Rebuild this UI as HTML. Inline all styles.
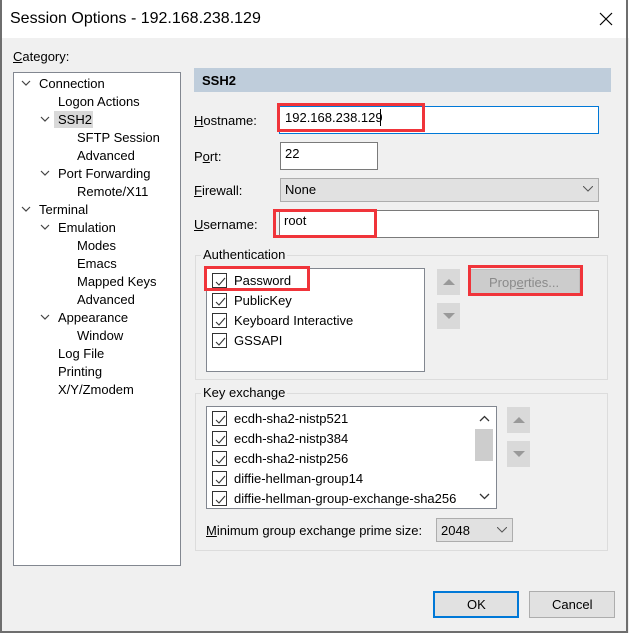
<!DOCTYPE html>
<html><head><meta charset="utf-8"><style>
*{box-sizing:border-box;margin:0;padding:0}
body{width:629px;height:633px;background:#fff;font-family:"Liberation Sans",sans-serif;font-size:13px;color:#000;position:relative;overflow:hidden}
.a{position:absolute}
.t{position:absolute;white-space:nowrap;line-height:14px}
.win{left:0;top:0;width:628px;height:633px;border:1px solid #6e6e6e;border-top:none;border-bottom:2px solid #6e6e6e;border-left:2px solid #6e6e6e;border-right:2px solid #6e6e6e}
.cb{position:absolute;width:15px;height:15px;border:1px solid #333;background:#fff}
.cb svg{position:absolute;left:1px;top:1px}
.u{text-decoration:underline}
</style></head><body>
<div class="a" style="left:0;top:38px;width:629px;height:595px;background:#f0f0f0"></div>
<div class="a win"></div>
<div class="t" style="left:10px;top:10px;font-size:16px;line-height:18px">Session Options - 192.168.238.129</div>
<svg class="a" style="left:599px;top:12px" width="14" height="14"><path d="M1 1L13 13M13 1L1 13" stroke="#000" stroke-width="1.2"/></svg>
<div class="t" style="left:13px;top:50px"><span class="u">C</span>ategory:</div>
<div class="a" style="left:13px;top:72px;width:168px;height:494px;background:#fff;border:1px solid #828790"></div>
<div class="a" style="left:54px;top:111px;width:39px;height:17px;background:#d9d9d9"></div>
<svg class="a" style="left:0;top:0" width="190" height="330" fill="none" stroke="#444" stroke-width="1.2">
<path d="M22 81l4 4 4-4M41 117l4 4 4-4M41 171l4 4 4-4M22 207l4 4 4-4M41 225l4 4 4-4M41 315l4 4 4-4"/></svg>
<div class="t" style="left:39px;top:77px">Connection</div>
<div class="t" style="left:58px;top:95px">Logon Actions</div>
<div class="t" style="left:58px;top:113px">SSH2</div>
<div class="t" style="left:77px;top:131px">SFTP Session</div>
<div class="t" style="left:77px;top:149px">Advanced</div>
<div class="t" style="left:58px;top:167px">Port Forwarding</div>
<div class="t" style="left:77px;top:185px">Remote/X11</div>
<div class="t" style="left:39px;top:203px">Terminal</div>
<div class="t" style="left:58px;top:221px">Emulation</div>
<div class="t" style="left:77px;top:239px">Modes</div>
<div class="t" style="left:77px;top:257px">Emacs</div>
<div class="t" style="left:77px;top:275px">Mapped Keys</div>
<div class="t" style="left:77px;top:293px">Advanced</div>
<div class="t" style="left:58px;top:311px">Appearance</div>
<div class="t" style="left:77px;top:329px">Window</div>
<div class="t" style="left:58px;top:347px">Log File</div>
<div class="t" style="left:58px;top:365px">Printing</div>
<div class="t" style="left:58px;top:383px">X/Y/Zmodem</div>

<div class="a" style="left:194px;top:68px;width:417px;height:24px;background:#bfcddb"></div>
<div class="t" style="left:202px;top:74px;font-weight:bold">SSH2</div>

<div class="t" style="left:194px;top:114px"><span class="u">H</span>ostname:</div>
<div class="a" style="left:279px;top:106px;width:320px;height:28px;background:#fff;border:1px solid #0078d7"></div>
<div class="t" style="left:285px;top:111px;font-size:13px">192.168.238.129</div>
<div class="a" style="left:380px;top:109px;width:1px;height:17px;background:#000"></div>
<div class="a" style="left:277px;top:103px;width:148px;height:29px;border:3px solid #f0343a"></div>

<div class="t" style="left:194px;top:150px">P<span class="u">o</span>rt:</div>
<div class="a" style="left:280px;top:142px;width:98px;height:28px;background:#fff;border:1px solid #7a7a7a"></div>
<div class="t" style="left:285px;top:147px;font-size:13px">22</div>

<div class="t" style="left:194px;top:184px"><span class="u">F</span>irewall:</div>
<div class="a" style="left:280px;top:178px;width:319px;height:24px;background:#e1e1e1;border:1px solid #adadad"></div>
<div class="t" style="left:285px;top:183px">None</div>
<svg class="a" style="left:583px;top:186px" width="10" height="6"><path d="M0 0l5 5 5-5" stroke="#555" fill="none"/></svg>

<div class="t" style="left:194px;top:218px"><span class="u">U</span>sername:</div>
<div class="a" style="left:279px;top:210px;width:320px;height:28px;background:#fff;border:1px solid #7a7a7a"></div>
<div class="t" style="left:284px;top:214px;font-size:13px">root</div>
<div class="a" style="left:273px;top:209px;width:104px;height:29px;border:3px solid #f0343a"></div>

<div class="a" style="left:195px;top:255px;width:413px;height:125px;border:1px solid #dcdcdc"></div>
<div class="t" style="left:201px;top:248px;background:#f0f0f0;padding:0 2px">Authentication</div>
<div class="a" style="left:206px;top:268px;width:219px;height:104px;background:#fff;border:1px solid #828790"></div>
<div class="a" style="left:437px;top:269px;width:23px;height:26px;background:#d9d9d9"></div>
<div class="a" style="left:437px;top:303px;width:23px;height:26px;background:#d9d9d9"></div>
<svg class="a" style="left:443px;top:279px" width="12" height="6"><path d="M0 6L6 0 12 6z" fill="#999"/></svg>
<svg class="a" style="left:443px;top:313px" width="12" height="6"><path d="M0 0L6 6 12 0z" fill="#999"/></svg>
<div class="a" style="left:470px;top:269px;width:110px;height:26px;background:#cccccc;border:1px solid #bfbfbf"></div>
<div class="t" style="left:489px;top:276px;color:#8a8a8a">Prop<span class="u">e</span>rties...</div>
<div class="a" style="left:468px;top:265px;width:115px;height:31px;border:3px solid #f0343a"></div>

<div class="a" style="left:195px;top:393px;width:413px;height:158px;border:1px solid #dcdcdc"></div>
<div class="t" style="left:201px;top:386px;background:#f0f0f0;padding:0 2px">Key exchange</div>
<div class="a" style="left:206px;top:406px;width:291px;height:103px;background:#fff;border:1px solid #828790"></div>
<div class="a" style="left:475px;top:429px;width:18px;height:32px;background:#cdcdcd"></div>
<svg class="a" style="left:479px;top:415px" width="11" height="7"><path d="M1 6l4.5-4.5L10 6" stroke="#333" fill="none" stroke-width="1.3"/></svg>
<svg class="a" style="left:479px;top:493px" width="11" height="7"><path d="M1 1l4.5 4.5L10 1" stroke="#333" fill="none" stroke-width="1.3"/></svg>
<div class="a" style="left:507px;top:407px;width:23px;height:26px;background:#d9d9d9"></div>
<div class="a" style="left:507px;top:441px;width:23px;height:26px;background:#d9d9d9"></div>
<svg class="a" style="left:513px;top:417px" width="12" height="6"><path d="M0 6L6 0 12 6z" fill="#999"/></svg>
<svg class="a" style="left:513px;top:451px" width="12" height="6"><path d="M0 0L6 6 12 0z" fill="#999"/></svg>

<div class="t" style="left:206px;top:524px"><span class="u">M</span>inimum group exchange prime size:</div>
<div class="a" style="left:436px;top:518px;width:77px;height:24px;background:#e1e1e1;border:1px solid #adadad"></div>
<div class="t" style="left:441px;top:524px">2048</div>
<svg class="a" style="left:497px;top:527px" width="10" height="6"><path d="M0 0l5 5 5-5" stroke="#555" fill="none"/></svg>

<div class="a" style="left:433px;top:591px;width:86px;height:27px;background:#e1e1e1;border:2px solid #0078d7"></div>
<div class="t" style="left:467px;top:598px">OK</div>
<div class="a" style="left:529px;top:591px;width:86px;height:27px;background:#e1e1e1;border:1px solid #adadad"></div>
<div class="t" style="left:552px;top:598px">Cancel</div>

<div class="cb" style="left:212px;top:273px"><svg width="13" height="13"><path d="M2 7l3 3 6-7" stroke="#333" fill="none" stroke-width="1.1"/></svg></div>
<div class="t" style="left:234px;top:274px">Password</div>
<div class="cb" style="left:212px;top:293px"><svg width="13" height="13"><path d="M2 7l3 3 6-7" stroke="#333" fill="none" stroke-width="1.1"/></svg></div>
<div class="t" style="left:234px;top:294px">PublicKey</div>
<div class="cb" style="left:212px;top:313px"><svg width="13" height="13"><path d="M2 7l3 3 6-7" stroke="#333" fill="none" stroke-width="1.1"/></svg></div>
<div class="t" style="left:234px;top:314px">Keyboard Interactive</div>
<div class="cb" style="left:212px;top:333px"><svg width="13" height="13"><path d="M2 7l3 3 6-7" stroke="#333" fill="none" stroke-width="1.1"/></svg></div>
<div class="t" style="left:234px;top:334px">GSSAPI</div>
<div class="a" style="left:204px;top:266px;width:106px;height:25px;border:3px solid #f0343a"></div>

<div class="cb" style="left:212px;top:411px"><svg width="13" height="13"><path d="M2 7l3 3 6-7" stroke="#333" fill="none" stroke-width="1.1"/></svg></div>
<div class="t" style="left:234px;top:412px">ecdh-sha2-nistp521</div>
<div class="cb" style="left:212px;top:431px"><svg width="13" height="13"><path d="M2 7l3 3 6-7" stroke="#333" fill="none" stroke-width="1.1"/></svg></div>
<div class="t" style="left:234px;top:432px">ecdh-sha2-nistp384</div>
<div class="cb" style="left:212px;top:451px"><svg width="13" height="13"><path d="M2 7l3 3 6-7" stroke="#333" fill="none" stroke-width="1.1"/></svg></div>
<div class="t" style="left:234px;top:452px">ecdh-sha2-nistp256</div>
<div class="cb" style="left:212px;top:471px"><svg width="13" height="13"><path d="M2 7l3 3 6-7" stroke="#333" fill="none" stroke-width="1.1"/></svg></div>
<div class="t" style="left:234px;top:472px">diffie-hellman-group14</div>
<div class="cb" style="left:212px;top:491px"><svg width="13" height="13"><path d="M2 7l3 3 6-7" stroke="#333" fill="none" stroke-width="1.1"/></svg></div>
<div class="t" style="left:234px;top:492px">diffie-hellman-group-exchange-sha256</div>
</body></html>
